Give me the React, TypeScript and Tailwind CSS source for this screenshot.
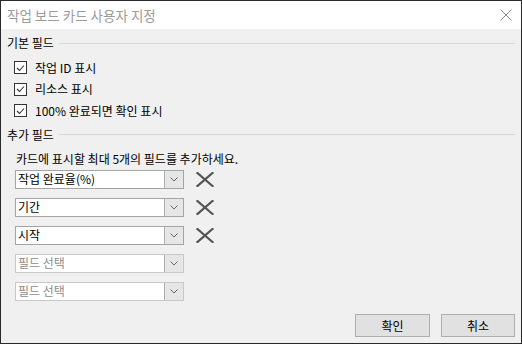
const font = { fontFamily: '"Noto Sans CJK KR", "Noto Sans", sans-serif' }

function CheckRow({ label }: { label: string }) {
  return (
    <div className="flex h-[21.5px] items-center pl-[7px]">
      <span className="flex h-[13px] w-[13px] items-center justify-center border border-[#333] bg-white">
        <svg width="9" height="8" viewBox="0 0 9 8">
          <path d="M1 4 L3.5 6.5 L8 1.5" fill="none" stroke="#333" strokeWidth="1.1" />
        </svg>
      </span>
      <span className="ml-[8px] text-[12px] text-black">{label}</span>
    </div>
  )
}

function Header({ label }: { label: string }) {
  return (
    <div className="flex h-[16px] items-center">
      <span className="text-[12px] leading-[16px] text-black">{label}</span>
      <div className="ml-[5px] h-px flex-1 bg-[#d8d8d8]" />
    </div>
  )
}

function Dropdown({ value, placeholder, removable }: { value?: string; placeholder?: string; removable?: boolean }) {
  return (
    <div className="flex items-center">
      <div
        className={`flex h-[19px] w-[169px] items-center border bg-white ${
          value ? 'border-[#a5a5a5]' : 'border-[#c8c8c8]'
        }`}
      >
        <span className={`flex-1 pl-[2px] text-[12px] leading-none ${value ? 'text-black' : 'text-[#8c8c8c]'}`}>
          {value ?? placeholder}
        </span>
        <span className="flex h-full w-[19px] items-center justify-center border-l border-[#adadad] bg-[#e6e6e6]">
          <svg width="8" height="5" viewBox="0 0 8 5">
            <path d="M0.5 0.5 L4 4 L7.5 0.5" fill="none" stroke="#666" strokeWidth="1" />
          </svg>
        </span>
      </div>
      {removable && (
        <svg className="ml-[12px]" width="18" height="15" viewBox="0 0 18 15">
          <path d="M1.5 1 L16.5 14 M16.5 1 L1.5 14" stroke="#555" strokeWidth="2.2" strokeLinecap="square" />
        </svg>
      )}
    </div>
  )
}

export default function App() {
  return (
    <div className="flex h-[344px] w-[522px] flex-col border border-[#2a2a2a] bg-[#f0f0f0]" style={font}>
      {/* title bar */}
      <div className="flex h-[28px] items-center justify-between bg-white pl-[6px] pr-[9px]">
        <span className="text-[13.5px] text-[#9b9b9b]">작업 보드 카드 사용자 지정</span>
        <svg width="12" height="12" viewBox="0 0 12 12">
          <path d="M0.5 0.5 L11.5 11.5 M11.5 0.5 L0.5 11.5" stroke="#888" strokeWidth="1" />
        </svg>
      </div>

      <div className="flex flex-1 flex-col px-[6px] pt-[6px]">
        <Header label="기본 필드" />
        <div className="mt-[6px] flex flex-col">
          <CheckRow label="작업 ID 표시" />
          <CheckRow label="리소스 표시" />
          <CheckRow label="100% 완료되면 확인 표시" />
        </div>

        <div className="mt-[5px]">
          <Header label="추가 필드" />
        </div>
        <div className="mt-[8px] pl-[9px] text-[12px] leading-[16px] text-black">
          카드에 표시할 최대 5개의 필드를 추가하세요.
        </div>
        <div className="mt-[3px] flex flex-col gap-[9px] pl-[8px]">
          <Dropdown value="작업 완료율(%)" removable />
          <Dropdown value="기간" removable />
          <Dropdown value="시작" removable />
          <Dropdown placeholder="필드 선택" />
          <Dropdown placeholder="필드 선택" />
        </div>

        <div className="mt-auto mb-[6px] flex justify-end gap-[11px]">
          <button className="h-[23px] w-[75px] border border-[#adadad] bg-[#e1e1e1] text-[12px] text-black">확인</button>
          <button className="h-[23px] w-[74px] border border-[#adadad] bg-[#e1e1e1] text-[12px] text-black">취소</button>
        </div>
      </div>
    </div>
  )
}
